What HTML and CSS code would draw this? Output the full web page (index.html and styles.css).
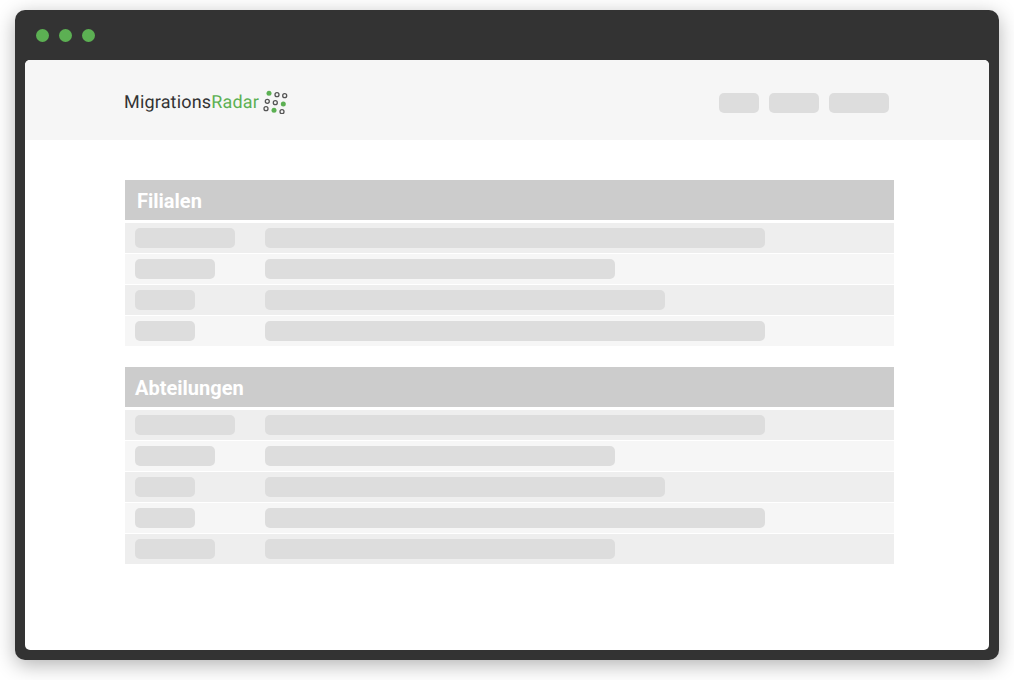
FILE: index.html
```html
<!DOCTYPE html>
<html lang="de">
<head>
<meta charset="utf-8">
<title>MigrationsRadar</title>
<link rel="stylesheet" href="styles.css">
</head>
<body>
<div class="window">
  <div class="titlebar"><span class="dot"></span><span class="dot"></span><span class="dot"></span></div>
  <div class="page">
    <header class="header">
      <div class="logo">
        <span class="logo-text">Migrations<span class="logo-accent">Radar</span></span>
        <svg class="logo-mark" width="26" height="24" viewBox="262 90 26 24">
          <circle class="on" cx="269" cy="93.3" r="2.5"/>
          <circle class="off" cx="277" cy="94.7" r="2"/>
          <circle class="off" cx="284.7" cy="95.7" r="2"/>
          <circle class="off" cx="267.3" cy="101.3" r="2"/>
          <circle class="off" cx="275.3" cy="102.7" r="2"/>
          <circle class="on" cx="283.3" cy="104" r="2.5"/>
          <circle class="off" cx="266" cy="108.7" r="2"/>
          <circle class="on" cx="274" cy="110.3" r="2.5"/>
          <circle class="off" cx="282" cy="111.7" r="2"/>
        </svg>
      </div>
      <nav class="nav"><span class="pill w40"></span><span class="pill w50"></span><span class="pill w60"></span></nav>
    </header>
    <main class="content">
      <section class="table">
        <h2 class="table-head filialen">Filialen</h2>
        <div class="row"><span class="pill c100"></span><span class="pill b500"></span></div>
        <div class="row"><span class="pill c80"></span><span class="pill b350"></span></div>
        <div class="row"><span class="pill c60"></span><span class="pill b400"></span></div>
        <div class="row"><span class="pill c60"></span><span class="pill b500"></span></div>
      </section>
      <section class="table">
        <h2 class="table-head">Abteilungen</h2>
        <div class="row"><span class="pill c100"></span><span class="pill b500"></span></div>
        <div class="row"><span class="pill c80"></span><span class="pill b350"></span></div>
        <div class="row"><span class="pill c60"></span><span class="pill b400"></span></div>
        <div class="row"><span class="pill c60"></span><span class="pill b500"></span></div>
        <div class="row"><span class="pill c80"></span><span class="pill b350"></span></div>
      </section>
    </main>
  </div>
</div>
</body>
</html>
```
FILE: styles.css
```css
html, body { margin: 0; padding: 0; background: #fff; }
body { width: 1014px; height: 680px; overflow: hidden; font-family: Roboto, "Liberation Sans", sans-serif; }
.window {
  box-sizing: border-box;
  width: 984px;
  height: 650px;
  margin: 10px 15px 0;
  background: #333;
  border-radius: 10px;
  padding: 0 10px 10px;
  display: flex;
  flex-direction: column;
  box-shadow: 0 5px 20px rgba(0,0,0,.3);
}
.titlebar { height: 50px; flex: none; display: flex; align-items: center; gap: 10px; padding-left: 11px; }
.dot { width: 13px; height: 13px; border-radius: 50%; background: #5cb053; }
.page { flex: 1; background: #fff; border-radius: 5px; overflow: hidden; }
.header {
  height: 80px;
  background: #f6f6f6;
  display: flex;
  align-items: center;
  justify-content: space-between;
  padding: 0 100px 0 99px;
}
.logo { display: flex; align-items: center; gap: 3px; margin-top: 4px; }
.logo-text { font-size: 18px; font-weight: 400; color: #333; line-height: 24px; letter-spacing: .17px; text-rendering: geometricPrecision; padding-top: 2px; }
.logo-accent { color: #5cb053; }
.logo-mark { display: block; margin-top: -1px; }
.logo-mark .on { fill: #5cb053; }
.logo-mark .off { fill: none; stroke: #555; stroke-width: 1.3; }
.nav { display: flex; gap: 10px; margin-top: 6px; }
.pill { display: block; height: 20px; border-radius: 5px; background: #ddd; flex: none; }
.w40 { width: 40px; }
.w50 { width: 50px; }
.w60 { width: 60px; }
.content { padding: 40px 95px 0 100px; }
.table { margin-bottom: 21px; }
.table-head {
  margin: 0 0 3px;
  height: 40px;
  line-height: 43px;
  background: #ccc;
  color: #fff;
  font-size: 20px;
  font-weight: 700;
  padding-left: 10px;
}
.table-head.filialen { padding-left: 12px; }
.row { height: 30px; margin-bottom: 1px; padding-left: 10px; display: flex; align-items: center; background: #f6f6f6; }
.row:nth-of-type(odd) { background: #eee; }
.c60 { width: 60px; margin-right: 70px; }
.c80 { width: 80px; margin-right: 50px; }
.c100 { width: 100px; margin-right: 30px; }
.b350 { width: 350px; }
.b400 { width: 400px; }
.b500 { width: 500px; }
```
